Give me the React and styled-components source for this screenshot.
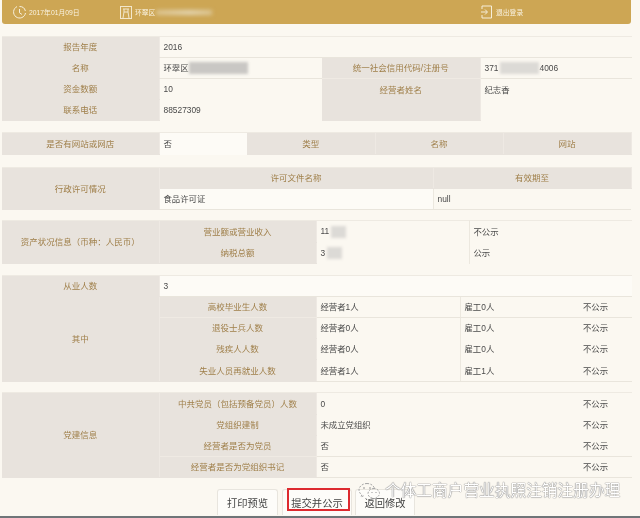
import React from "react";
import styled, { createGlobalStyle } from "styled-components";

const Global = createGlobalStyle`
  html, body { margin: 0; padding: 0; background: #fbf8f1; }
  body { font-family: "Liberation Sans", "Noto Sans CJK SC", sans-serif; }
`;

const Page = styled.div`
  position: relative;
  width: 640px;
  height: 518px;
  overflow: hidden;
  display: flex;
  flex-direction: column;
  background: #fbf8f1;
  filter: blur(0.3px);
`;

const Header = styled.header`
  display: flex;
  align-items: center;
  height: 24px;
  margin: 0 9px 0 2px;
  padding-left: 10px;
  background: #cda654;
  border-radius: 0 0 3px 3px;
  color: #f9f2e0;
  font-size: 6.8px;
`;

const HeaderItem = styled.div`
  display: flex;
  align-items: center;
  gap: ${(p) => p.$gap}px;
  width: ${(p) => p.$w}px;
  flex: none;
`;

const HeaderBlur = styled.span`
  display: inline-block;
  width: 56px;
  height: 5px;
  margin-left: -2px;
  background: linear-gradient(90deg, #dcc48f, #e3d5b2 60%, #dcc693);
  filter: blur(2px);
`;

const Sheet = styled.table`
  width: ${(p) => p.$w || 630}px;
  margin: ${(p) => p.$top}px 0 0 2px;
  border-collapse: collapse;
  table-layout: fixed;
  border-top: 1px solid #eeeae2;
  flex: none;
`;

const Col = styled.col`
  width: ${(p) => p.$w}px;
`;

const Row = styled.tr`
  height: ${(p) => p.$h || 21}px;
`;

const Label = styled.th`
  padding: 0;
  background: #e8e3dd;
  color: #9f7f49;
  font-size: 8.5px;
  font-weight: 400;
  text-align: center;
  vertical-align: ${(p) => (p.$top ? "top" : "middle")};
  padding-top: ${(p) => (p.$top ? 5 : 0)}px;
  border-bottom: 1px solid ${(p) => (p.$line ? "#efeae3" : "#e8e3dd")};
  border-right: 1px solid #eee9e3;
  line-height: 12px;
`;

const Value = styled.td`
  padding: 0 0 0 4px;
  color: #4a4a4a;
  font-size: 8.4px;
  background: ${(p) => (p.$light ? "#fdfbf6" : "transparent")};
  vertical-align: ${(p) => (p.$top ? "top" : "middle")};
  padding-top: ${(p) => (p.$top ? 5 : 0)}px;
  border-bottom: 1px solid ${(p) => (p.$line ? "#e9e5dc" : "transparent")};
  border-right: ${(p) => (p.$divider ? "1px solid #ece8df" : "none")};
  line-height: 12px;
  white-space: nowrap;
`;

const Smudge = styled.span`
  display: inline-block;
  vertical-align: middle;
  width: ${(p) => p.$w}px;
  height: 12px;
  margin-left: ${(p) => p.$before || 0}px;
  background: ${(p) => p.$tone || "#dcdad6"};
  filter: blur(1.5px);
`;

const Actions = styled.div`
  display: flex;
  align-items: stretch;
  margin-top: 11px;
  padding-left: 217px;
  height: 26px;
  flex: none;
`;

const ActionButton = styled.button`
  position: relative;
  margin-right: ${(p) => p.$after || 0}px;
  width: ${(p) => p.$w}px;
  padding: 0;
  font-family: inherit;
  font-size: 10.3px;
  color: #444;
  background: #fdfcf9;
  border: 1px solid #e8e5de;
  border-bottom: none;
  border-radius: 3px 3px 0 0;
`;

const RedMark = styled.span`
  position: absolute;
  left: 4px;
  right: 1px;
  top: -2px;
  bottom: 4px;
  border: 2px solid #dd2a2f;
`;

const Edge = styled.div`
  margin-top: auto;
  height: 2px;
  background: #6f7578;
`;

const Watermark = styled.div`
  position: absolute;
  left: 358px;
  top: 481px;
  display: flex;
  align-items: center;
  gap: 2px;
  color: #fff;
  font-size: 15.7px;
  line-height: 20px;
  white-space: nowrap;
  text-shadow: 0 0 1px #555, 0 0 1px #888;
`;

const ClockIcon = () => (
  <svg width="15" height="15" viewBox="0 0 15 15" fill="none" stroke="#f8f1de" strokeWidth="1">
    <path d="M5 1.6A6 6 0 1 0 13.5 8" />
    <path d="M7.5 1.5A6 6 0 0 1 13.4 6" />
    <path d="M7.5 4v3.8l2.4 1.6" />
  </svg>
);

const ShopIcon = () => (
  <svg width="12" height="13" viewBox="0 0 12 13" fill="none" stroke="#f3e7cb" strokeWidth="1">
    <rect x="0.5" y="0.5" width="11" height="12" />
    <path d="M3 3h6M4 3v3l-1 6M8 3v3l1 6M4 6h4" />
  </svg>
);

const ExitIcon = () => (
  <svg width="12" height="14" viewBox="0 0 12 14" fill="none" stroke="#f6eeda" strokeWidth="1">
    <path d="M1 4V1h9.500v12H1v-3" />
    <path d="M0 7h6M4 4.500 6.500 7 4 9.500" />
  </svg>
);

const BubbleIcon = () => (
  <svg width="25" height="18" viewBox="0 0 25 18" fill="none">
    <g stroke="#a5a5a5" strokeWidth="1" strokeDasharray="2 1.400">
      <path d="M9 1.500C4.500 1.500 1 4.400 1 8c0 2 1.100 3.700 2.800 4.900L3 15l2.600-1.200" />
      <path d="M9 1.500c3.600 0 6.400 1.900 7.400 4.500" />
      <path d="M16 6.500c-3.400 0-6 2.200-6 5s2.600 4.800 6 4.800l2.500 1.200-.5-1.800c2-1 3.500-2.500 3.500-4.200 0-2.800-2.600-5-5.500-5Z" />
    </g>
    <circle cx="6" cy="6" r="0.8" fill="#888" />
    <circle cx="12" cy="6" r="0.8" fill="#888" />
    <circle cx="14" cy="10.500" r="0.6" fill="#888" />
    <circle cx="18" cy="10.500" r="0.6" fill="#888" />
  </svg>
);

export default function App() {
  return (
    <>
      <Global />
      <Page>
        <Header>
          <HeaderItem $w={108} $gap={2}>
            <ClockIcon />
            <span>2017年01月09日</span>
          </HeaderItem>
          <HeaderItem $w={361} $gap={3}>
            <ShopIcon />
            <span>环翠区</span>
            <HeaderBlur />
          </HeaderItem>
          <HeaderItem $w={60} $gap={3}>
            <ExitIcon />
            <span>退出登录</span>
          </HeaderItem>
        </Header>

        <Sheet $top={12}>
          <colgroup>
            <Col $w={157} /><Col $w={163} /><Col $w={158} /><Col $w={152} />
          </colgroup>
          <tbody>
            <Row>
              <Label>报告年度</Label>
              <Value colSpan={3} $line>2016</Value>
            </Row>
            <Row>
              <Label>名称</Label>
              <Value $line>环翠区<Smudge $w={59} $tone="#c9c7c4" /></Value>
              <Label $line>统一社会信用代码/注册号</Label>
              <Value $line>371<Smudge $w={39} $before={2} />4006</Value>
            </Row>
            <Row>
              <Label>资金数额</Label>
              <Value>10</Value>
              <Label rowSpan={2} $top>经营者姓名</Label>
              <Value rowSpan={2} $top>纪志香</Value>
            </Row>
            <Row>
              <Label>联系电话</Label>
              <Value>88527309</Value>
            </Row>
          </tbody>
        </Sheet>

        <Sheet $top={11} $w={629}>
          <colgroup>
            <Col $w={157} /><Col $w={88} /><Col $w={128} /><Col $w={128} /><Col $w={128} />
          </colgroup>
          <tbody>
            <Row $h={22}>
              <Label>是否有网站或网店</Label>
              <Value $light>否</Value>
              <Label>类型</Label>
              <Label>名称</Label>
              <Label>网站</Label>
            </Row>
          </tbody>
        </Sheet>

        <Sheet $top={12} $w={629}>
          <colgroup>
            <Col $w={157} /><Col $w={274} /><Col $w={198} />
          </colgroup>
          <tbody>
            <Row>
              <Label rowSpan={2}>行政许可情况</Label>
              <Label>许可文件名称</Label>
              <Label>有效期至</Label>
            </Row>
            <Row>
              <Value $line $light $divider>食品许可证</Value>
              <Value $line>null</Value>
            </Row>
          </tbody>
        </Sheet>

        <Sheet $top={10}>
          <colgroup>
            <Col $w={157} /><Col $w={157} /><Col $w={153} /><Col $w={163} />
          </colgroup>
          <tbody>
            <Row $h={22}>
              <Label rowSpan={2}>资产状况信息（币种：人民币）</Label>
              <Label>营业额或营业收入</Label>
              <Value $divider>11<Smudge $w={15} $before={2} /></Value>
              <Value>不公示</Value>
            </Row>
            <Row>
              <Label>纳税总额</Label>
              <Value $divider>3<Smudge $w={15} $before={2} /></Value>
              <Value>公示</Value>
            </Row>
          </tbody>
        </Sheet>

        <Sheet $top={11}>
          <colgroup>
            <Col $w={157} /><Col $w={157} /><Col $w={144} /><Col $w={119} /><Col $w={53} />
          </colgroup>
          <tbody>
            <Row>
              <Label>从业人数</Label>
              <Value colSpan={4} $light $line>3</Value>
            </Row>
            <Row>
              <Label rowSpan={4}>其中</Label>
              <Label $line>高校毕业生人数</Label>
              <Value $line $divider>经营者1人</Value>
              <Value $line>雇工0人</Value>
              <Value $line>不公示</Value>
            </Row>
            <Row>
              <Label>退役士兵人数</Label>
              <Value $divider>经营者0人</Value>
              <Value>雇工0人</Value>
              <Value>不公示</Value>
            </Row>
            <Row>
              <Label>残疾人人数</Label>
              <Value $divider>经营者0人</Value>
              <Value>雇工0人</Value>
              <Value>不公示</Value>
            </Row>
            <Row $h={22}>
              <Label>失业人员再就业人数</Label>
              <Value $line $divider>经营者1人</Value>
              <Value $line>雇工1人</Value>
              <Value $line>不公示</Value>
            </Row>
          </tbody>
        </Sheet>

        <Sheet $top={10}>
          <colgroup>
            <Col $w={157} /><Col $w={157} /><Col $w={263} /><Col $w={53} />
          </colgroup>
          <tbody>
            <Row $h={22}>
              <Label rowSpan={4}>党建信息</Label>
              <Label>中共党员（包括预备党员）人数</Label>
              <Value>0</Value>
              <Value>不公示</Value>
            </Row>
            <Row>
              <Label>党组织建制</Label>
              <Value>未成立党组织</Value>
              <Value>不公示</Value>
            </Row>
            <Row>
              <Label $line>经营者是否为党员</Label>
              <Value $line>否</Value>
              <Value $line>不公示</Value>
            </Row>
            <Row>
              <Label>经营者是否为党组织书记</Label>
              <Value $line>否</Value>
              <Value $line>不公示</Value>
            </Row>
          </tbody>
        </Sheet>

        <Actions>
          <ActionButton $w={61} $after={4}>打印预览</ActionButton>
          <ActionButton $w={70} $after={3}>
            提交并公示
            <RedMark />
          </ActionButton>
          <ActionButton $w={60}>返回修改</ActionButton>
        </Actions>
        <Edge />
        <Watermark>
          <BubbleIcon />
          <span>个体工商户营业执照注销注册办理</span>
        </Watermark>
      </Page>
    </>
  );
}
